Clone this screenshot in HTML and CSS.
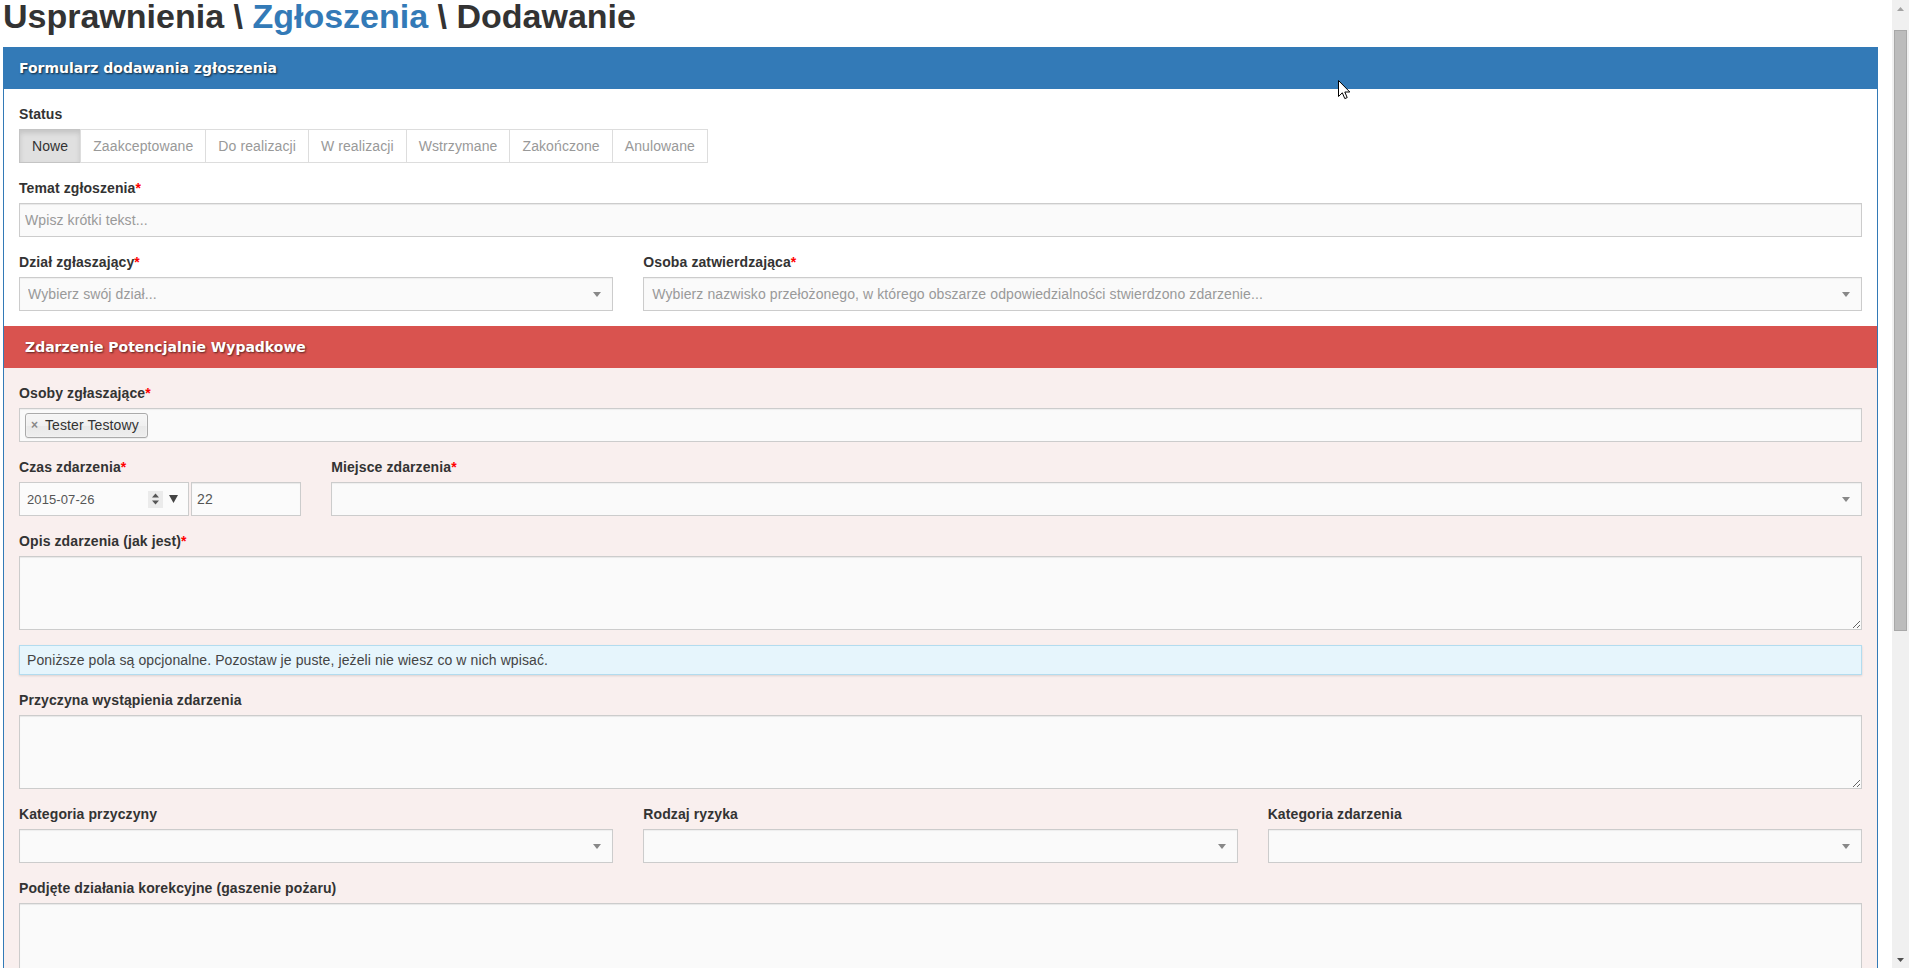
FILE: index.html
```html
<!DOCTYPE html>
<html lang="pl">
<head>
<meta charset="utf-8">
<title>Usprawnienia - Zgłoszenia - Dodawanie</title>
<link rel="stylesheet" href="styles.css">
</head>
<body>
<div class="screen">
  <div class="page">
    <h1 class="title">Usprawnienia \ <a class="title-link" href="#">Zgłoszenia</a> \ Dodawanie</h1>
    <div class="panel">
      <div class="panel-heading">Formularz dodawania zgłoszenia</div>
      <div class="panel-body">
        <div class="form-group">
          <label class="label">Status</label>
          <div class="btn-group">
            <span class="btn active">Nowe</span>
            <span class="btn">Zaakceptowane</span>
            <span class="btn">Do realizacji</span>
            <span class="btn">W realizacji</span>
            <span class="btn">Wstrzymane</span>
            <span class="btn">Zakończone</span>
            <span class="btn">Anulowane</span>
          </div>
        </div>
        <div class="form-group">
          <label class="label">Temat zgłoszenia<span class="req">*</span></label>
          <input class="form-control" type="text" placeholder="Wpisz krótki tekst...">
        </div>
        <div class="row">
          <div class="form-group col-4">
            <label class="label">Dział zgłaszający<span class="req">*</span></label>
            <div class="select"><span class="select-text">Wybierz swój dział...</span><svg class="select-arrow" width="8" height="5" viewBox="0 0 8 5"><path d="M0 0H8L4 5Z" fill="#888"/></svg></div>
          </div>
          <div class="form-group col-8">
            <label class="label">Osoba zatwierdzająca<span class="req">*</span></label>
            <div class="select"><span class="select-text">Wybierz nazwisko przełożonego, w którego obszarze odpowiedzialności stwierdzono zdarzenie...</span><svg class="select-arrow" width="8" height="5" viewBox="0 0 8 5"><path d="M0 0H8L4 5Z" fill="#888"/></svg></div>
          </div>
        </div>

        <div class="danger">
          <div class="danger-heading">Zdarzenie Potencjalnie Wypadkowe</div>
          <div class="danger-body">
            <div class="form-group">
              <label class="label">Osoby zgłaszające<span class="req">*</span></label>
              <div class="tags">
                <span class="tag"><span class="tag-x">×</span>Tester Testowy</span>
              </div>
            </div>
            <div class="row">
              <div class="form-group col-2">
                <label class="label">Czas zdarzenia<span class="req">*</span></label>
                <div class="datetime">
                  <div class="date-input">
                    <span class="date-text">2015-07-26</span>
                    <span class="date-controls">
                      <span class="spin">
                        <svg width="9" height="14" viewBox="0 0 9 14"><path d="M1 5.5L4.5 1.5L8 5.5Z" fill="#555"/><path d="M1 8.5L8 8.5L4.5 12.5Z" fill="#555"/></svg>
                      </span>
                      <svg class="drop" width="9" height="8" viewBox="0 0 9 8"><path d="M0 0H9L4.5 8Z" fill="#444"/></svg>
                    </span>
                  </div>
                  <input class="form-control time-input" type="text" value="22">
                </div>
              </div>
              <div class="form-group col-10">
                <label class="label">Miejsce zdarzenia<span class="req">*</span></label>
                <div class="select"><span class="select-text"></span><svg class="select-arrow" width="8" height="5" viewBox="0 0 8 5"><path d="M0 0H8L4 5Z" fill="#888"/></svg></div>
              </div>
            </div>
            <div class="form-group">
              <label class="label">Opis zdarzenia (jak jest)<span class="req">*</span></label>
              <textarea class="form-control area" rows="3"></textarea>
            </div>
            <div class="alert">Poniższe pola są opcjonalne. Pozostaw je puste, jeżeli nie wiesz co w nich wpisać.</div>
            <div class="form-group">
              <label class="label">Przyczyna wystąpienia zdarzenia</label>
              <textarea class="form-control area" rows="3"></textarea>
            </div>
            <div class="row">
              <div class="form-group col-4">
                <label class="label">Kategoria przyczyny</label>
                <div class="select"><span class="select-text"></span><svg class="select-arrow" width="8" height="5" viewBox="0 0 8 5"><path d="M0 0H8L4 5Z" fill="#888"/></svg></div>
              </div>
              <div class="form-group col-4">
                <label class="label">Rodzaj ryzyka</label>
                <div class="select"><span class="select-text"></span><svg class="select-arrow" width="8" height="5" viewBox="0 0 8 5"><path d="M0 0H8L4 5Z" fill="#888"/></svg></div>
              </div>
              <div class="form-group col-4">
                <label class="label">Kategoria zdarzenia</label>
                <div class="select"><span class="select-text"></span><svg class="select-arrow" width="8" height="5" viewBox="0 0 8 5"><path d="M0 0H8L4 5Z" fill="#888"/></svg></div>
              </div>
            </div>
            <div class="form-group">
              <label class="label">Podjęte działania korekcyjne (gaszenie pożaru)</label>
              <textarea class="form-control area" rows="3"></textarea>
            </div>
          </div>
        </div>
      </div>
    </div>
  </div>
  <div class="scrollbar">
    <div class="sb-btn"><svg width="7" height="4" viewBox="0 0 7 4"><path d="M0 4L3.5 0L7 4Z" fill="#a3a3a3"/></svg></div>
    <div class="sb-thumb"></div>
    <div class="sb-space"></div>
    <div class="sb-btn"><svg width="7" height="4" viewBox="0 0 7 4"><path d="M0 0H7L3.5 4Z" fill="#505050"/></svg></div>
  </div>
</div>
<svg class="cursor" width="13" height="20" viewBox="0 0 13 20"><path d="M0.5 0.5V16.5L4.3 12.8L6.8 18.6L9.2 17.6L6.8 12H11.8Z" fill="#fff" stroke="#000" stroke-width="1" stroke-linejoin="round"/></svg>
</body>
</html>
```

FILE: styles.css
```css
* { box-sizing: border-box; }

html, body {
  margin: 0;
  height: 100%;
  overflow: hidden;
}

body {
  font-family: "Liberation Sans", Arial, sans-serif;
  font-size: 14px;
  letter-spacing: 0.1px;
  color: #333;
  background: #fff;
}

.screen {
  display: flex;
  height: 968px;
  overflow: hidden;
}

.page {
  flex: 1;
  min-width: 0;
  padding: 0 14px 0 3px;
  overflow: hidden;
}

.title {
  margin: 0 0 15px;
  font-size: 34px;
  line-height: 32px;
  font-weight: bold;
  letter-spacing: 0;
  color: #333;
}

.title-link {
  color: #337ab7;
  text-decoration: none;
}

.panel {
  border: 1px solid #337ab7;
  background: #fff;
}

.panel-heading {
  height: 41px;
  line-height: 40px;
  padding: 0 15px;
  background: #337ab7;
  color: #fff;
  font-family: "DejaVu Sans", Verdana, sans-serif;
  font-weight: bold;
  font-size: 14px;
  letter-spacing: 0;
  text-shadow: 1px 1px 2px rgba(0, 0, 0, 0.7);
}

.panel-body {
  padding: 15px 15px 0;
}

.form-group {
  margin-bottom: 15px;
}

.label {
  display: block;
  margin-bottom: 5px;
  line-height: 20px;
  font-weight: bold;
  font-size: 14px;
  color: #333;
}

.req {
  color: #f00;
  font-weight: bold;
  line-height: 0;
}

.btn-group {
  display: flex;
}

.btn {
  display: block;
  height: 34px;
  padding: 6px 12px;
  line-height: 20px;
  font-size: 14px;
  color: #999;
  background: #fff;
  border: 1px solid #ddd;
  margin-left: -1px;
}

.btn:first-child {
  margin-left: 0;
}

.btn.active {
  color: #333;
  background: #e0e0e0;
  border-color: #c4c4c4;
  box-shadow: inset 0 3px 5px rgba(0, 0, 0, 0.125);
}

.form-control {
  display: block;
  width: 100%;
  height: 34px;
  padding: 6px 5px;
  font-family: "Liberation Sans", Arial, sans-serif;
  font-size: 14px;
  letter-spacing: 0.1px;
  line-height: 20px;
  color: #555;
  background: #fafafa;
  border: 1px solid #ccc;
  border-radius: 0;
  box-shadow: inset 0 1px 1px rgba(0, 0, 0, 0.075);
  outline: none;
}

.form-control::placeholder {
  color: #999;
}

.area {
  height: 74px;
  resize: vertical;
}

.row {
  display: grid;
  grid-template-columns: repeat(12, 1fr);
  column-gap: 30px;
}

.col-2 { grid-column: span 2; }
.col-4 { grid-column: span 4; }
.col-8 { grid-column: span 8; }
.col-10 { grid-column: span 10; }

.select {
  display: flex;
  align-items: center;
  justify-content: space-between;
  height: 34px;
  padding: 0 11px 0 8px;
  background: #fafafa;
  border: 1px solid #ccc;
  box-shadow: inset 0 1px 1px rgba(0, 0, 0, 0.05);
  color: #999;
  font-size: 14px;
}

.select-text {
  white-space: nowrap;
  overflow: hidden;
}

.select-arrow {
  flex: none;
}

.danger {
  margin: 0 -15px;
  background: #f9efee;
}

.danger-heading {
  height: 42px;
  line-height: 42px;
  padding: 0 21px;
  background: #d9534f;
  color: #fff;
  font-family: "DejaVu Sans", Verdana, sans-serif;
  font-weight: bold;
  font-size: 14px;
  letter-spacing: 0;
  text-shadow: 1px 1px 2px rgba(0, 0, 0, 0.6);
}

.danger-body {
  padding: 15px 15px 30px;
}

.tags {
  height: 34px;
  padding: 3px 5px;
  background: #fafafa;
  border: 1px solid #ccc;
  box-shadow: inset 0 1px 1px rgba(0, 0, 0, 0.05);
  display: flex;
  align-items: center;
}

.tag {
  display: inline-flex;
  align-items: center;
  height: 25px;
  padding: 0 8px 0 5px;
  font-size: 14px;
  color: #333;
  border: 1px solid #aaa;
  border-radius: 3px;
  background: linear-gradient(#f4f4f4 20%, #f0f0f0 50%, #e8e8e8 52%, #eee 100%);
  box-shadow: inset 0 0 2px #fff, 0 1px 0 rgba(0, 0, 0, 0.05);
}

.tag-x {
  display: inline-block;
  width: 14px;
  font-size: 12px;
  font-weight: bold;
  color: #888;
}

.datetime {
  display: flex;
  gap: 2px;
}

.date-input {
  display: flex;
  align-items: center;
  justify-content: space-between;
  width: 170px;
  height: 34px;
  padding: 0 10px 0 7px;
  background: #fbfbfb;
  border: 1px solid #ccc;
  font-size: 13px;
  color: #555;
  flex: none;
}

.date-controls {
  display: flex;
  align-items: center;
  gap: 6px;
}

.spin {
  display: flex;
  align-items: center;
  justify-content: center;
  width: 15px;
  height: 17px;
  background: #ebebeb;
}

.time-input {
  flex: 1;
  min-width: 0;
  background: #fbfbfb;
  color: #555;
}

.alert {
  height: 30px;
  margin-bottom: 15px;
  padding: 0 7px;
  line-height: 28px;
  font-size: 14px;
  color: #444;
  background: #e6f5fc;
  border: 1px solid #b3dcef;
  box-shadow: 0 1px 2px rgba(0, 0, 0, 0.12);
}

.scrollbar {
  width: 17px;
  flex: none;
  display: flex;
  flex-direction: column;
  align-items: center;
  background: #f0f0f0;
}

.sb-btn {
  width: 17px;
  height: 17px;
  display: flex;
  align-items: center;
  justify-content: center;
  flex: none;
}

.sb-thumb {
  margin-top: 13px;
  width: 13px;
  height: 601px;
  background: #bcbcbc;
  border: 1px solid #a8a8a8;
  flex: none;
}

.sb-space {
  flex: 1;
}

.cursor {
  position: absolute;
  left: 1338px;
  top: 80px;
}
```
